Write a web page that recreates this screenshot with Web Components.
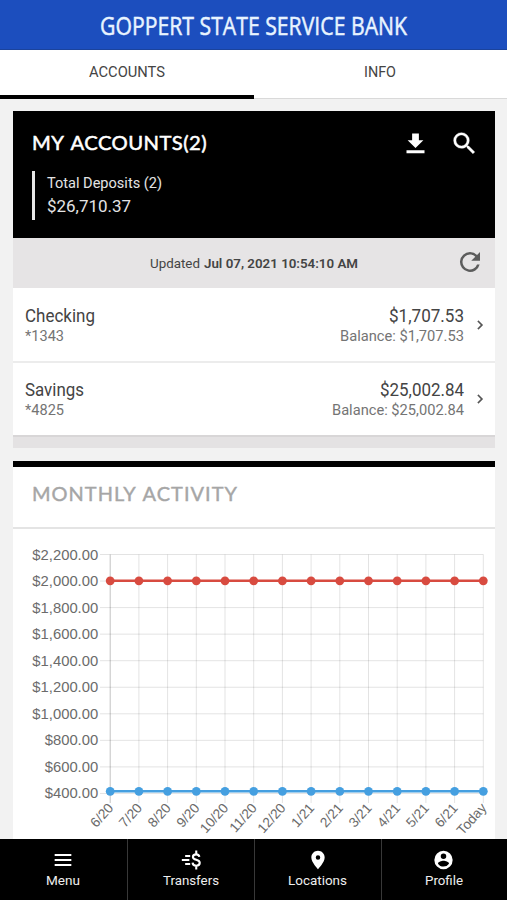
<!DOCTYPE html>
<html lang="en">
<head>
<meta charset="utf-8">
<title>Goppert State Service Bank</title>
<style>
html,body{margin:0;height:100%;overflow:hidden}
body{font-family:Roboto,"Liberation Sans",sans-serif;color:#444;background:#f2f2f2}
</style>
</head>
<body>
<bank-app></bank-app>
<script>
const define = (name, html, setup) => customElements.define(name, class extends HTMLElement {
  connectedCallback() {
    if (this.shadowRoot) return;
    const root = this.attachShadow({ mode: 'open' });
    root.innerHTML = html;
    if (setup) setup(this, root);
  }
});

/* Single line of text fitted to an exact width */
define('fit-text', `<style>:host{display:block;flex:none}svg{display:block;overflow:visible}</style>
<svg><text x="0" fill="currentColor" lengthAdjust="spacingAndGlyphs"></text></svg>`, (el, root) => {
  const w = el.getAttribute('width'), h = el.getAttribute('height') || 20;
  const svg = root.querySelector('svg'), t = root.querySelector('text');
  svg.setAttribute('width', w); svg.setAttribute('height', h);
  t.setAttribute('y', el.getAttribute('base') || 15);
  t.setAttribute('textLength', w);
  t.textContent = el.getAttribute('text');
});

const icons = {
  download: '<path d="M19 9h-4V3H9v6H5l7 7 7-7zM4 18v2.6h16V18H4z"/>',
  search: '<path stroke="currentColor" stroke-width=".3" d="M15.5 14h-.79l-.28-.27A6.47 6.47 0 0 0 16 9.5 6.5 6.5 0 1 0 9.5 16c1.61 0 3.09-.59 4.23-1.57l.27.28v.79l5 4.99L20.49 19l-4.99-5zm-6 0C7.01 14 5 11.99 5 9.5S7.01 5 9.5 5 14 7.01 14 9.5 11.99 14 9.5 14z"/>',
  refresh: '<path d="M17.65 6.35A7.96 7.96 0 0 0 12 4a8 8 0 1 0 7.73 10h-2.08A6 6 0 1 1 12 6c1.66 0 3.14.69 4.22 1.78L13 11h7V4l-2.35 2.35z"/>',
  chevron: '<path stroke="currentColor" stroke-width=".3" d="M10 6L8.59 7.41 13.17 12l-4.58 4.59L10 18l6-6z"/>',
  menu: '<path d="M2 19.200h20v-2.500H2v2.500zm0-6h20v-2.500H2v2.500zM2 4.700v2.500h20V4.700z"/>',
  transfers: '<path d="M5 6h6v2.300H5zM1 10.800h9v2.300H1zM5 15.600h6v2.300H5z"/><path fill="none" stroke="currentColor" stroke-width="2.500" d="M22 8.300C21.800 6.300 20.200 5.200 18.200 5.200c-2.200 0-3.900 1.200-3.900 3.200 0 4.500 8.200 2.300 8.200 7 0 2.100-1.800 3.400-4.200 3.400-2.500 0-4.300-1.300-4.400-3.600M18.300 .5v5M18.300 18.500v5"/>',
  pin: '<path d="M12 1C7.600 1 4 4.500 4 8.900c0 5.800 8 14.100 8 14.100s8-8.300 8-14.100C20 4.500 16.400 1 12 1zm0 10.700a2.700 2.700 0 1 1 0-5.400 2.700 2.700 0 0 1 0 5.400z"/>',
  profile: '<path transform="translate(-1.8 -1.2) scale(1.1)" d="M12 2a10 10 0 1 0 0 20 10 10 0 0 0 0-20zm0 3a3 3 0 1 1 0 6 3 3 0 0 1 0-6zm0 14.200a7.200 7.200 0 0 1-6-3.220c.03-1.990 4-3.080 6-3.080s5.970 1.090 6 3.080a7.200 7.200 0 0 1-6 3.220z"/>'
};
define('ui-icon', `<style>:host{display:block;flex:none}svg{display:block;fill:currentColor;overflow:visible}</style><svg viewBox="0 0 24 24"></svg>`, (el, root) => {
  const s = root.querySelector('svg'), n = el.getAttribute('size');
  s.setAttribute('width', n); s.setAttribute('height', n);
  s.innerHTML = icons[el.getAttribute('name')];
});

define('app-header', `<style>
:host{display:flex;justify-content:center;height:50px;background:#1c4ebe;border-bottom:1px solid #1b439c;box-sizing:border-box;color:#e8f4ff}
fit-text{font:500 26px "Open Sans",sans-serif;stroke:#e8f4ff;stroke-width:.5px}
</style><fit-text text="GOPPERT STATE SERVICE BANK" width="307" height="49" base="34.5"></fit-text>`);

define('app-tabs', `<style>
:host{display:grid;grid-template-columns:254px 1fr;height:49px;background:#fff;color:#444}
div{display:flex;justify-content:center;box-sizing:border-box;border-bottom:1px solid #d9d9d9;padding:12px 1px 0 0}
.on{border-bottom:4px solid #000;padding-right:0}
fit-text{font-size:14.5px}
</style><div class="on"><fit-text text="ACCOUNTS" width="76" base="15"></fit-text></div><div><fit-text text="INFO" width="32" base="15"></fit-text></div>`);

define('account-summary', `<style>
:host{display:flex;flex-direction:column;height:127px;background:#000;color:#fff;box-sizing:border-box;padding:19px 19px 0 18.500px}
header{display:flex;height:26px;align-items:center}
.t{font:400 19.500px Lato,sans-serif;letter-spacing:.4px;word-spacing:2px;stroke:#fff;stroke-width:.5px;margin-right:auto}
.dl{margin-right:21px}
.sum{margin-top:14.500px;height:49px;border-left:3px solid #e8e8e8;padding-left:12px;color:#e4e4e4}
.a{font-size:14.500px}.b{font-size:17px}
</style><header><fit-text class="t" text="MY ACCOUNTS(2)" width="175" height="26" base="20"></fit-text>
<ui-icon class="dl" name="download" size="27"></ui-icon><ui-icon name="search" size="29" style="margin-right:-3px"></ui-icon></header>
<div class="sum"><fit-text class="a" text="Total Deposits (2)" width="115" height="24" base="17"></fit-text><fit-text class="b" text="$26,710.37" width="84" height="24" base="17"></fit-text></div>`);

define('update-bar', `<style>
:host{display:flex;height:50px;background:#e6e4e5;color:#444;align-items:center;box-sizing:border-box;padding:0 10px 0 136.500px;font-size:13.500px}
.d{font-weight:600;margin-left:4px;margin-right:auto}
ui-icon{color:#5c5c5c;margin-top:-3px}
</style><fit-text text="Updated" width="50"></fit-text><fit-text class="d" text="Jul 07, 2021 10:54:10 AM" width="154"></fit-text><ui-icon name="refresh" size="30"></ui-icon>`);

define('account-row', `<style>
:host{display:flex;height:74.500px;box-sizing:border-box;background:#fff;padding:16.500px 6px 0 12px;border-bottom:2px solid #ececec}
.l{margin-right:auto}.r{display:flex;flex-direction:column;align-items:flex-end}
.n{font-size:17.500px;color:#444}.s{font-size:14.500px;color:#747474}
ui-icon{color:#555;margin:11px 0 0 7px}
</style><div class="l"></div><div class="r"></div><ui-icon name="chevron" size="18"></ui-icon>`, (el, root) => {
  const g = k => el.getAttribute(k).split('|');
  const line = (cls, [t, w], h, b) => `<fit-text class="${cls}" text="${t}" width="${w}" height="${h}" base="${b}"></fit-text>`;
  root.querySelector('.l').innerHTML = line('n', g('name'), 22, 17) + line('s', g('number'), 20, 14);
  root.querySelector('.r').innerHTML = line('n', g('amount'), 22, 17) + line('s', g('balance'), 20, 14);
});

define('activity-chart', `<style>:host{display:block}svg{display:block}
text{font-family:"Liberation Sans",sans-serif;font-size:14.800px;fill:#6b6b6b}
.m{font-size:13.700px}</style><svg width="482" height="309"></svg>`, (el, root) => {
  const x = i => 97.200 + i * 28.700, y = i => 25.500 + i * 26.550;
  const months = ['6/20','7/20','8/20','9/20','10/20','11/20','12/20','1/21','2/21','3/21','4/21','5/21','6/21','Today'];
  let s = '';
  for (let i = 0; i < 10; i++) {
    const v = 2200 - i * 200;
    s += `<path d="M87 ${y(i)}H${x(13)}" stroke="#000" stroke-opacity=".11"/>`;
    s += `<text x="85.200" y="${y(i) + 5}" text-anchor="end">$${v.toLocaleString('en-US')}.00</text>`;
  }
  months.forEach((m, i) => {
    s += `<path d="M${x(i)} 25.500V274" stroke="#000" stroke-opacity="${i ? .11 : .24}"/>`;
    s += `<text class="m" text-anchor="end" transform="translate(${x(i) + 4} 279.500) rotate(-48)">${m}</text>`;
  });
  [['#d84b40', 51.800], ['#459fe0', 262.300]].forEach(([c, yy]) => {
    s += `<path d="M${x(0)} ${yy}H${x(13)}" stroke="${c}" stroke-width="2.600"/>`;
    months.forEach((m, i) => s += `<circle cx="${x(i)}" cy="${yy}" r="4.400" fill="${c}"/>`);
  });
  root.querySelector('svg').innerHTML = s;
});

define('activity-card', `<style>
:host{display:block;background:#fff;border-top:6px solid #000;height:377px;overflow:hidden}
header{height:62px;box-sizing:border-box;padding:12px 19px 0;border-bottom:2px solid #e4e4e4;color:#a6a6a6}
fit-text{font:400 19.500px Lato,sans-serif;letter-spacing:1px;word-spacing:1px;stroke:#a6a6a6;stroke-width:.4px}
</style><header><fit-text text="MONTHLY ACTIVITY" width="206" height="28" base="22"></fit-text></header><slot></slot>`);

define('nav-item', `<style>
:host{display:flex;flex-direction:column;align-items:center;color:#fff;box-sizing:border-box;padding:11px 1px 0 0}
fit-text{font-size:13.500px;color:#eee}
</style><ui-icon></ui-icon><fit-text></fit-text>`, (el, root) => {
  const i = document.createElement('ui-icon'), t = document.createElement('fit-text');
  i.setAttribute('name', el.getAttribute('icon')); i.setAttribute('size', 20);
  t.setAttribute('text', el.getAttribute('label')); t.setAttribute('width', el.getAttribute('width'));
  root.querySelector('ui-icon').replaceWith(i); root.querySelector('fit-text').replaceWith(t);
});

define('app-nav', `<style>
:host{display:grid;grid-template-columns:127px 127px 127px 126px;height:61px;background:#000}
nav-item+nav-item{border-left:1px solid #383838}
nav-item:first-child{padding:11px 0 0 1px}
</style><nav-item icon="menu" label="Menu" width="34"></nav-item><nav-item icon="transfers" label="Transfers" width="56"></nav-item><nav-item icon="pin" label="Locations" width="59"></nav-item><nav-item icon="profile" label="Profile" width="38"></nav-item>`);

define('bank-app', `<style>
:host{display:flex;flex-direction:column;width:507px;height:900px;background:#f2f2f2;overflow:hidden}
main{height:740px;box-sizing:border-box;padding:12px 12px 0 13px;overflow:hidden}
.end{height:11px;background:#e4e2e3;border-top:2px solid #d8d6d7;margin-top:-2px}
activity-card{margin-top:13px}
account-row+account-row{padding-top:16px}
</style><app-header></app-header><app-tabs></app-tabs><main>
<account-summary></account-summary><update-bar></update-bar>
<account-row name="Checking|70" number="*1343|39" amount="$1,707.53|75" balance="Balance: $1,707.53|124"></account-row>
<account-row name="Savings|59" number="*4825|39" amount="$25,002.84|84" balance="Balance: $25,002.84|132"></account-row>
<div class="end"></div>
<activity-card><activity-chart></activity-chart></activity-card>
</main><app-nav></app-nav>`);
</script>
</body>
</html>
